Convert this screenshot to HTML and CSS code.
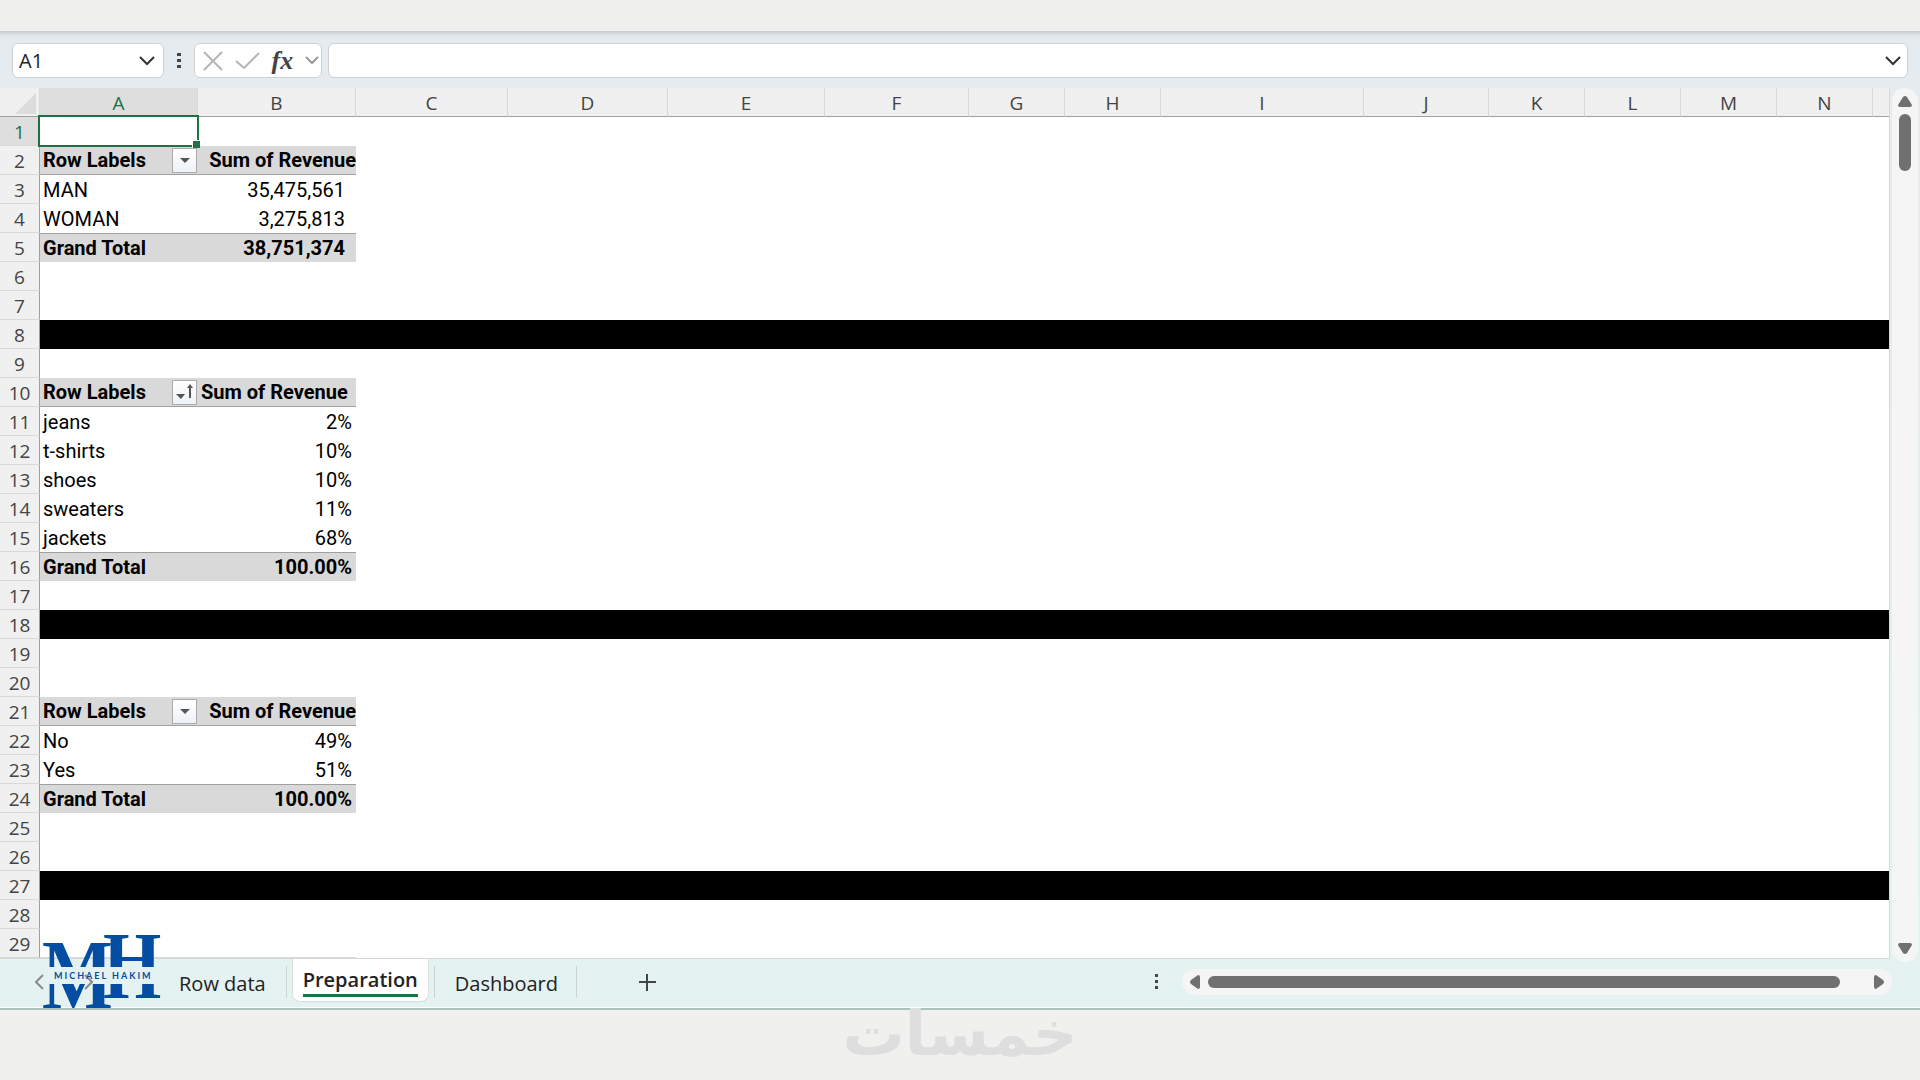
FILE: index.html
```html
<!DOCTYPE html>
<html lang="en">
<head>
    <meta charset="UTF-8">
    <meta name="viewport" content="width=device-width, initial-scale=1.0">
    <title>Preparation</title>
    <link rel="stylesheet" href="styles.css">
</head>
<body>
    <div class="top-strip"></div>

    <div class="workbook">
        <!-- Formula bar -->
        <div class="formula-bar">
            <div class="name-box">
                <input type="text" class="name-input" value="A1" aria-label="Name box">
                <button class="icon-btn" aria-label="Show names">
                    <svg width="16" height="10" viewBox="0 0 16 10"><path d="M1 1l7 7 7-7" fill="none" stroke="#333" stroke-width="2"/></svg>
                </button>
            </div>
            <svg class="dots" width="4" height="16" viewBox="0 0 4 16"><path d="M0 0h4v3H0zM0 6h4v3H0zM0 12h4v3H0z" fill="#444"/></svg>
            <div class="fx-box">
                <button class="icon-btn" aria-label="Cancel">
                    <svg width="20" height="20" viewBox="0 0 20 20"><path d="M1 1l18 18M19 1L1 19" fill="none" stroke="#b5b5b5" stroke-width="2"/></svg>
                </button>
                <button class="icon-btn" aria-label="Enter">
                    <svg width="25" height="18" viewBox="0 0 25 18"><path d="M1 9l8 7L24 1" fill="none" stroke="#b5b5b5" stroke-width="2"/></svg>
                </button>
                <button class="icon-btn fx" aria-label="Insert function">fx</button>
                <button class="icon-btn" aria-label="More functions">
                    <svg width="14" height="9" viewBox="0 0 14 9"><path d="M1 1l6 6 6-6" fill="none" stroke="#999" stroke-width="2"/></svg>
                </button>
            </div>
            <div class="formula-box">
                <input type="text" class="formula-input" aria-label="Formula">
                <button class="icon-btn" aria-label="Expand formula bar">
                    <svg width="16" height="10" viewBox="0 0 16 10"><path d="M1 1l7 7 7-7" fill="none" stroke="#333" stroke-width="2"/></svg>
                </button>
            </div>
        </div>

        <!-- Grid and vertical scroll bar -->
        <div class="sheet">
            <table class="grid">
                <colgroup>
                    <col class="w-head"><col class="w-a"><col class="w-a"><col class="w-c"><col class="w-d"><col class="w-e"><col class="w-f"><col class="w-s"><col class="w-s"><col class="w-i"><col class="w-j"><col class="w-s"><col class="w-s"><col class="w-s"><col class="w-s"><col>
                </colgroup>
                <thead>
                    <tr>
                        <th class="corner"><svg width="21" height="21" viewBox="0 0 21 21"><path d="M21 0v21H0z" fill="#dcdcdc"/></svg></th>
                        <th class="active">A</th>
                        <th>B</th>
                        <th>C</th>
                        <th>D</th>
                        <th>E</th>
                        <th>F</th>
                        <th>G</th>
                        <th>H</th>
                        <th>I</th>
                        <th>J</th>
                        <th>K</th>
                        <th>L</th>
                        <th>M</th>
                        <th>N</th>
                        <th></th>
                    </tr>
                </thead>
                <tbody>
                    <tr><th class="active">1</th><td class="selected"><span class="selection"></span></td><td></td><td colspan="13"></td></tr>
                    <tr class="pivot-head"><th>2</th><td><div class="label">Row Labels<button class="filter" aria-label="Filter"><svg width="10" height="5" viewBox="0 0 10 5"><path d="M0 0h10L5 5z" fill="#555"/></svg></button></div></td><td class="over">Sum of Revenue</td><td colspan="13"></td></tr>
                    <tr><th>3</th><td>MAN</td><td class="num comma">35,475,561</td><td colspan="13"></td></tr>
                    <tr><th>4</th><td>WOMAN</td><td class="num comma">3,275,813</td><td colspan="13"></td></tr>
                    <tr class="pivot-total"><th>5</th><td>Grand Total</td><td class="num comma">38,751,374</td><td colspan="13"></td></tr>
                    <tr><th>6</th><td></td><td></td><td colspan="13"></td></tr>
                    <tr><th>7</th><td></td><td></td><td colspan="13"></td></tr>
                    <tr class="divider"><th>8</th><td colspan="15"></td></tr>
                    <tr><th>9</th><td></td><td></td><td colspan="13"></td></tr>
                    <tr class="pivot-head"><th>10</th><td><div class="label">Row Labels<button class="filter" aria-label="Filter, sorted ascending"><svg width="18" height="16" viewBox="0 0 18 16"><path d="M0 10h9l-4 5zM13 14V4h-2l3-4 3 4h-2v10z" fill="#555"/></svg></button></div></td><td class="after">Sum of Revenue</td><td colspan="13"></td></tr>
                    <tr><th>11</th><td>jeans</td><td class="num">2%</td><td colspan="13"></td></tr>
                    <tr><th>12</th><td>t-shirts</td><td class="num">10%</td><td colspan="13"></td></tr>
                    <tr><th>13</th><td>shoes</td><td class="num">10%</td><td colspan="13"></td></tr>
                    <tr><th>14</th><td>sweaters</td><td class="num">11%</td><td colspan="13"></td></tr>
                    <tr><th>15</th><td>jackets</td><td class="num">68%</td><td colspan="13"></td></tr>
                    <tr class="pivot-total"><th>16</th><td>Grand Total</td><td class="num">100.00%</td><td colspan="13"></td></tr>
                    <tr><th>17</th><td></td><td></td><td colspan="13"></td></tr>
                    <tr class="divider"><th>18</th><td colspan="15"></td></tr>
                    <tr><th>19</th><td></td><td></td><td colspan="13"></td></tr>
                    <tr><th>20</th><td></td><td></td><td colspan="13"></td></tr>
                    <tr class="pivot-head"><th>21</th><td><div class="label">Row Labels<button class="filter" aria-label="Filter"><svg width="10" height="5" viewBox="0 0 10 5"><path d="M0 0h10L5 5z" fill="#555"/></svg></button></div></td><td class="over">Sum of Revenue</td><td colspan="13"></td></tr>
                    <tr><th>22</th><td>No</td><td class="num">49%</td><td colspan="13"></td></tr>
                    <tr><th>23</th><td>Yes</td><td class="num">51%</td><td colspan="13"></td></tr>
                    <tr class="pivot-total"><th>24</th><td>Grand Total</td><td class="num">100.00%</td><td colspan="13"></td></tr>
                    <tr><th>25</th><td></td><td></td><td colspan="13"></td></tr>
                    <tr><th>26</th><td></td><td></td><td colspan="13"></td></tr>
                    <tr class="divider"><th>27</th><td colspan="15"></td></tr>
                    <tr><th>28</th><td></td><td></td><td colspan="13"></td></tr>
                    <tr class="cut"><th>29</th><td></td><td></td><td colspan="13"></td></tr>
                </tbody>
            </table>
            <div class="v-scroll">
                <svg width="14" height="11" viewBox="0 0 14 11"><path d="M5 1q2-2 4 0l5 8q0 2-2 2H2q-2 0-2-2z" fill="#707070"/></svg>
                <div class="v-thumb"></div>
                <svg width="14" height="11" viewBox="0 0 14 11"><path d="M5 10q2 2 4 0l5-8q0-2-2-2H2Q0 0 0 2z" fill="#707070"/></svg>
            </div>
        </div>

        <!-- Sheet tabs -->
        <div class="tab-bar">
            <div class="tab-nav">
                <button class="icon-btn" aria-label="Previous sheet"><svg width="9" height="16" viewBox="0 0 9 16"><path d="M8 1L1 8l7 7" fill="none" stroke="#8a8a8a" stroke-width="2"/></svg></button>
                <button class="icon-btn" aria-label="Next sheet"><svg width="9" height="16" viewBox="0 0 9 16"><path d="M1 1l7 7-7 7" fill="none" stroke="#8a8a8a" stroke-width="2"/></svg></button>
            </div>
            <a href="#row-data" class="tab first">Row data</a>
            <a href="#preparation" class="tab current"><span>Preparation</span></a>
            <a href="#dashboard" class="tab last">Dashboard</a>
            <button class="icon-btn add" aria-label="New sheet"><svg width="17" height="17" viewBox="0 0 17 17"><path d="M8 0v17M0 8h17" fill="none" stroke="#444" stroke-width="2"/></svg></button>
            <svg class="tab-dots" width="3" height="16" viewBox="0 0 3 16"><path d="M0 0h3v3H0zM0 6h3v3H0zM0 12h3v3H0z" fill="#444"/></svg>
            <div class="h-scroll">
                <svg width="10" height="14" viewBox="0 0 10 14"><path d="M1 5q-2 2 0 4l7 5q2 0 2-2V2q0-2-2-2z" fill="#707070"/></svg>
                <div class="h-track"><div class="h-thumb"></div></div>
                <svg width="10" height="14" viewBox="0 0 10 14"><path d="M9 5q2 2 0 4l-7 5q-2 0-2-2V2q0-2 2-2z" fill="#707070"/></svg>
            </div>

            <svg class="brand" width="124" height="78" viewBox="0 0 124 78">
                <clipPath id="upper"><rect x="0" y="0" width="124" height="35"/></clipPath>
                <clipPath id="lower"><rect x="0" y="52" width="124" height="26"/></clipPath>
                <g class="monogram" clip-path="url(#upper)">
                    <text x="1" y="60">M</text>
                    <text x="62" y="52">H</text>
                </g>
                <g class="monogram" clip-path="url(#lower)" aria-hidden="true">
                    <text x="1" y="76">M</text>
                    <text x="62" y="66">H</text>
                </g>
                <text class="brand-name" x="13" y="47">MICHAEL HAKIM</text>
            </svg>
        </div>
    </div>

    <div class="footer" lang="ar" dir="rtl">خمسات</div>
</body>
</html>
```
FILE: styles.css
```css
/* Global Styles */
* {
    box-sizing: border-box;
}

body {
    font-family: "Open Sans", "Noto Sans", sans-serif;
    margin: 0;
    font-size: 19px;
    color: #222;
    background-color: #f0f0ee;
    display: flex;
    flex-direction: column;
    min-height: 100vh;
}

svg {
    display: block;
    flex-shrink: 0;
}

.top-strip {
    height: 31px;
}

.workbook {
    background: linear-gradient(#e6ebf0, #e4f2f1);
    border-bottom: 2px solid #aac4bd;
    box-shadow: inset 0 -1px #fff;
}

.icon-btn {
    display: flex;
    align-items: center;
    justify-content: center;
    padding: 0;
    border: none;
    background: none;
    cursor: pointer;
}

/* Formula bar */
.formula-bar {
    display: flex;
    align-items: center;
    height: 57px;
    padding: 2px 12px 0;
    background: linear-gradient(#c6cccf, #dfe4e8 4px, #e6ebf0 8px);
}

.name-box, .fx-box, .formula-box {
    display: flex;
    align-items: center;
    height: 35px;
    background-color: #fff;
    border: 1px solid #cfd1d3;
    border-radius: 6px;
}

.name-box {
    width: 152px;
    padding: 0 8px 0 6px;
}

.name-input, .formula-input {
    flex: 1;
    min-width: 0;
    padding: 0;
    border: none;
    outline: none;
    background: none;
    font-family: inherit;
    font-size: 20px;
    color: #222;
}

.dots {
    margin: 0 13px;
}

.fx-box {
    width: 128px;
    margin-right: 6px;
    padding: 0 2px 0 8px;
    justify-content: space-between;
}

.fx {
    font-family: "Liberation Serif", serif;
    font-style: italic;
    font-weight: bold;
    font-size: 26px;
    line-height: 32px;
    color: #444;
}

.formula-box {
    flex: 1;
    padding: 0 6px;
}

/* Grid */
.sheet {
    display: flex;
}

.grid {
    flex: 1;
    width: 100%;
    table-layout: fixed;
    border-collapse: separate;
    border-spacing: 0;
    background-color: #fff;
    border-right: 1px solid #d5d8da;
    border-bottom: 1px solid #d5d8da;
}

.w-head { width: 40px; }
.w-a { width: 158px; }
.w-c { width: 152px; }
.w-d { width: 160px; }
.w-e { width: 157px; }
.w-f { width: 144px; }
.w-s { width: 96px; }
.w-i { width: 203px; }
.w-j { width: 125px; }

th, td {
    height: 29px;
    padding: 0;
    line-height: 28px;
    white-space: nowrap;
}

th {
    padding-top: 2px;
    line-height: 26px;
    font-weight: normal;
    color: #444;
    background-color: #f0f0f0;
}

thead th {
    border-bottom: 1px solid #a0a0a0;
    border-right: 1px solid #d8d8d8;
}

thead th:last-child {
    border-right: none;
}

.corner svg {
    margin: 0 3px 0 auto;
}

tbody th {
    border-right: 1px solid #a0a0a0;
    border-bottom: 1px solid #d8d8d8;
}

thead .active, tbody .active {
    color: #1e7145;
    background-color: #dedede;
}

td {
    padding: 0 4px 0 3px;
    font-family: Roboto, "Liberation Sans", sans-serif;
    font-size: 20px;
    color: #000;
}

.num {
    text-align: right;
}

.comma {
    padding-right: 11px;
}

.pivot-head td:not(:last-child), .pivot-total td:not(:last-child) {
    background-color: #d9d9d9;
    font-weight: bold;
}

.pivot-head td:not(:last-child) {
    border-bottom: 1px solid #a0a0a0;
}

.pivot-total td:not(:last-child) {
    border-top: 1px solid #a0a0a0;
}

.pivot-head td.over {
    padding: 0;
    text-align: right;
}

.label {
    display: flex;
    align-items: center;
    justify-content: space-between;
    margin-right: -3px;
}

.filter {
    display: flex;
    align-items: center;
    justify-content: center;
    width: 25px;
    height: 25px;
    padding: 0;
    border: 1px solid #a9abb0;
    background: linear-gradient(#fff, #eef1f6);
    cursor: pointer;
}

.divider td {
    background-color: #000;
}

.cut td:not(:last-child) {
    border-bottom: 1px solid #d9d9d9;
}

.selected {
    position: relative;
}

.selection {
    position: absolute;
    inset: -2px -1px -1px -2px;
    border: 2px solid #1e7145;
}

.selection::after {
    content: "";
    position: absolute;
    right: -3px;
    bottom: -3px;
    width: 7px;
    height: 7px;
    background-color: #1e7145;
    border-top: 1px solid #fff;
    border-left: 1px solid #fff;
}

/* Scroll bars */
.v-scroll {
    display: flex;
    flex-direction: column;
    align-items: center;
    width: 26px;
    margin: 0 2px -3px;
    padding: 8px 0;
    background-color: #f5f5f5;
    border-radius: 13px;
}

.v-thumb {
    width: 12px;
    height: 57px;
    margin: 7px 0 auto;
    background-color: #707070;
    border-radius: 6px;
}

.h-scroll {
    display: flex;
    align-items: center;
    width: 37%;
    height: 26px;
    margin: 0 28px 0 24px;
    padding: 0 8px;
    background-color: #f5f5f5;
    border-radius: 13px;
}

.h-track {
    flex: 1;
    margin: 0 8px;
}

.h-thumb {
    width: 96%;
    height: 12px;
    background-color: #707070;
    border-radius: 6px;
}

/* Sheet tabs */
.tab-bar {
    position: relative;
    display: flex;
    align-items: center;
    height: 49px;
    padding-bottom: 3px;
}

.tab-nav {
    display: flex;
    justify-content: space-between;
    width: 58px;
    margin-left: 35px;
}

.tab {
    color: #222;
    font-size: 20px;
    text-decoration: none;
    line-height: 28px;
}

.tab.first {
    margin-left: 66px;
    padding: 4px 20px 0;
    border-right: 1px solid #ccd2d2;
}

.tab.current {
    align-self: flex-start;
    height: 43px;
    margin: 0 5px;
    padding: 7px 10px 0;
    background-color: #fff;
    border: 1px solid #d9dddd;
    border-top: none;
    border-radius: 0 0 8px 8px;
    font-weight: 600;
}

.tab.current span {
    display: block;
    border-bottom: 3px solid #1e7145;
}

.tab.last {
    padding: 4px 18px 0 20px;
    border-left: 1px solid #ccd2d2;
    border-right: 1px solid #ccd2d2;
}

.add {
    margin-left: 62px;
}

.tab-dots {
    margin-left: auto;
}

/* Brand mark over the corner of the sheet */
.brand {
    position: absolute;
    left: 41px;
    top: -27px;
    pointer-events: none;
}

.monogram {
    font-family: "Liberation Serif", serif;
    font-weight: bold;
    font-size: 75px;
    fill: #034ea2;
}

.brand-name {
    font-family: Lato, sans-serif;
    font-weight: bold;
    font-size: 9px;
    letter-spacing: 2px;
    fill: #034ea2;
}

.footer {
    font-family: "DejaVu Sans", sans-serif;
    font-weight: bold;
    font-size: 62px;
    line-height: 48px;
    text-align: center;
    color: #dedede;
}
```
